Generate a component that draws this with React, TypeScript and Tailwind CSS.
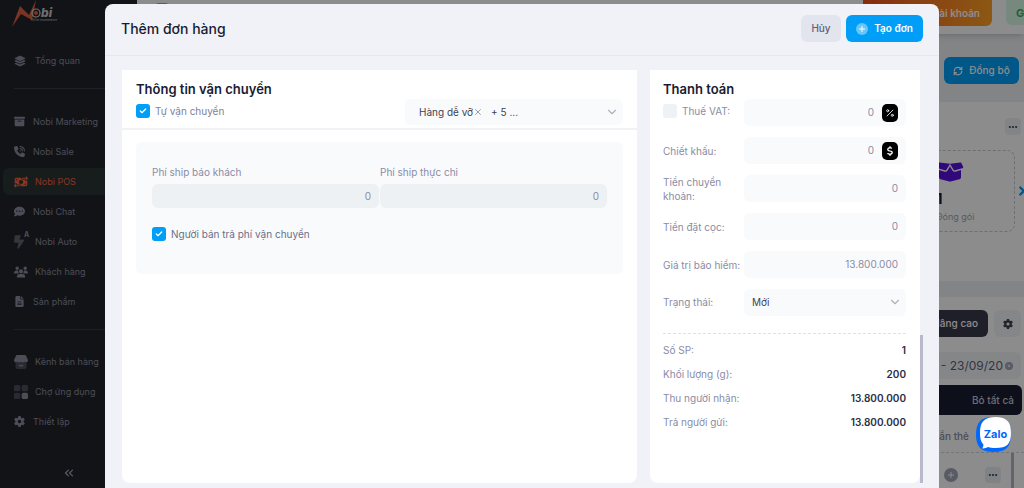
import { useState } from "react";
import type { ReactNode } from "react";
import clsx from "clsx";
import { Check, ChevronDown, ChevronRight, ChevronsLeft, Percent, X } from "lucide-react";
import {
  FaBoltLightning,
  FaBoxArchive,
  FaBoxOpen,
  FaCircleXmark,
  FaCommentDots,
  FaDollarSign,
  FaEllipsis,
  FaFileLines,
  FaGear,
  FaLayerGroup,
  FaMoneyBillTransfer,
  FaPhoneVolume,
  FaPlus,
  FaUsers,
} from "react-icons/fa6";
import { LuRefreshCw } from "react-icons/lu";

type NavItem = {
  label: string;
  icon: ReactNode;
  wide?: boolean;
  active?: boolean;
};

const ShopIcon = () => (
  <svg viewBox="0 0 14 14" className="size-3.5">
    <rect x="1.5" y="4" width="11" height="10" rx="2" fill="#4b4d5c" />
    <path
      d="M3 0h8a1 1 0 0 1 1 .7L14 5a2 2 0 0 1-3.5 1.6 2.4 2.4 0 0 1-3.5 0 2.4 2.4 0 0 1-3.5 0A2 2 0 0 1 0 5L2 .7A1 1 0 0 1 3 0z"
      fill="#8a8c9e"
    />
    <path d="M4.8 10c1 1.3 3.4 1.3 4.4 0" stroke="#a5a7b5" fill="none" />
  </svg>
);

const AppsIcon = () => (
  <svg viewBox="0 0 14 14" className="size-3.5">
    <rect width="6.3" height="6.3" rx="1.6" fill="#4b4d5c" />
    <rect x="7.7" width="6.3" height="6.3" rx="1.6" fill="#4b4d5c" />
    <rect y="7.7" width="6.3" height="6.3" rx="1.6" fill="#4b4d5c" />
    <rect x="7.7" y="7.7" width="6.3" height="6.3" rx="1.6" fill="#8a8c9e" />
  </svg>
);

const AutoIcon = () => (
  <span className="flex items-start">
    <FaBoltLightning className="h-3.5 w-2.5 text-[#5f6170]" />
    <span className="-mt-1 text-[7px] leading-[8px] font-bold">A</span>
  </span>
);

const mainNav: NavItem[] = [
  { label: "Nobi Marketing", icon: <FaBoxArchive className="size-[11px]" /> },
  { label: "Nobi Sale", icon: <FaPhoneVolume className="size-[11px]" /> },
  {
    label: "Nobi POS",
    icon: <FaMoneyBillTransfer className="size-3.5" />,
    wide: true,
    active: true,
  },
  { label: "Nobi Chat", icon: <FaCommentDots className="size-[11px]" /> },
  { label: "Nobi Auto", icon: <AutoIcon />, wide: true },
  { label: "Khách hàng", icon: <FaUsers className="size-3.5" />, wide: true },
  { label: "Sản phẩm", icon: <FaFileLines className="size-[11px]" /> },
];

const extraNav: NavItem[] = [
  { label: "Kênh bán hàng", icon: <ShopIcon />, wide: true },
  { label: "Chợ ứng dụng", icon: <AppsIcon />, wide: true },
  { label: "Thiết lập", icon: <FaGear className="size-[11px]" /> },
];

function NavLink({ item }: { item: NavItem }) {
  return (
    <a
      href="#"
      className={clsx(
        "ml-[3px] flex h-[27px] items-center rounded-l-md pl-[11px] text-[9px] whitespace-nowrap",
        item.active ? "bg-[#2b3336] text-[#f8633f]" : "text-[#8a8c9e]"
      )}
    >
      <span className={clsx("flex justify-start", item.wide ? "w-[21px]" : "w-[19px]")}>
        {item.icon}
      </span>
      {item.label}
    </a>
  );
}

function Logo() {
  return (
    <div className="flex h-[30px] items-start pl-[11px]">
      <svg viewBox="0 0 26 28" className="h-7 w-[26px] shrink-0">
        <path d="M1 27 L9 6 L18 15 L25 0 L21 20 L10 14 Z" fill="#e0603c" />
      </svg>
      <div className="-ml-1.5 pt-[7px] text-[#c8c8cc]">
        <div className="flex items-center text-xs leading-[11px] font-extrabold italic">
          <svg viewBox="0 0 10 10" className="size-2.5">
            <circle cx="5" cy="5" r="4" fill="none" stroke="#c8c8cc" strokeWidth="1.2" />
            <circle cx="5" cy="5" r="2" fill="#e0603c" />
          </svg>
          bi
        </div>
        <div className="text-[3px] leading-[4px]">All for ecommerce</div>
      </div>
    </div>
  );
}

function Sidebar() {
  return (
    <aside className="flex w-[137px] shrink-0 flex-col bg-[#22242b]">
      <Logo />
      <nav className="flex flex-1 flex-col">
        <div className="mt-[17px]">
          <NavLink
            item={{
              label: "Tổng quan",
              icon: <FaLayerGroup className="size-3" />,
              wide: true,
            }}
          />
        </div>
        <hr className="mt-3.5 ml-3.5 border-[#3a3c46]" />
        <div className="mt-[19px] flex flex-col gap-[3px]">
          {mainNav.map((item) => (
            <NavLink key={item.label} item={item} />
          ))}
        </div>
        <hr className="mt-3.5 ml-3.5 border-[#3a3c46]" />
        <div className="mt-[18px] flex flex-col gap-[3px]">
          {extraNav.map((item) => (
            <NavLink key={item.label} item={item} />
          ))}
        </div>
      </nav>
      <button type="button" aria-label="Thu gọn" className="mb-2 flex justify-center text-[#a5a7b5]">
        <ChevronsLeft className="size-3.5" />
      </button>
    </aside>
  );
}

function Dashboard() {
  return (
    <div className="flex min-w-0 flex-1 flex-col bg-[#edf1f4]">
      <header className="flex h-[34px] shrink-0 items-start justify-between bg-white pl-[18px] shadow-md">
        <span className="mt-[3px] size-3.5 rounded-sm bg-[#f58a6e]" />
        <div className="flex gap-3.5">
          <button
            type="button"
            className="h-[26px] w-[129px] rounded-b-md bg-linear-to-r from-[#f1501f] to-[#ffa024] pr-3 text-right text-[10px] font-semibold text-white"
          >
            Nâng cấp tài khoản
          </button>
          <div className="h-[25px] w-[18px] rounded-bl-md bg-[#d9f7e5] pl-2.5 text-[11px] leading-[26px] font-bold text-[#31b566]">
            G
          </div>
        </div>
      </header>

      <div className="flex h-[68px] shrink-0 items-center justify-end pt-[5px] pr-[5px]">
        <button
          type="button"
          className="flex h-[27px] w-[75px] items-center justify-center gap-1.5 rounded-md bg-[#009ef7] text-[10px] font-medium text-white"
        >
          <LuRefreshCw className="size-2.5" strokeWidth={3} />
          Đồng bộ
        </button>
      </div>

      <section className="flex h-[179px] shrink-0 flex-col bg-white pt-4 pr-[3px]">
        <button
          type="button"
          aria-label="Thêm"
          className="flex h-[17px] w-4 items-center justify-center self-end rounded bg-[#edf1f4] text-[#3f4254]"
        >
          <FaEllipsis className="size-2.5" />
        </button>
        <div className="mt-[15px] flex items-center justify-end">
          <div className="flex h-[82px] w-[130px] flex-col rounded-lg border border-dashed border-[#c9c9d6] pt-2.5 pl-[50px]">
            <FaBoxOpen className="h-[22px] w-7 text-[#5a10dd]" />
            <div className="mt-[5px] text-[15px] leading-[22px] font-bold text-[#181c32]">1</div>
            <div className="text-[9px] leading-[14px] text-[#a1a5b7]">Đóng gói</div>
          </div>
          <ChevronRight className="-mr-2 size-3.5 text-[#009ef7]" strokeWidth={4} />
        </div>
      </section>

      <section className="mt-4 flex flex-1 flex-col bg-white pt-[13px]">
        <div className="flex justify-end gap-1.5 pr-[3px]">
          <button
            type="button"
            className="h-[27px] rounded-md bg-[#3a3a4c] px-2.5 text-[10px] font-medium text-white"
          >
            Nâng cao
          </button>
          <button
            type="button"
            aria-label="Cài đặt"
            className="flex size-[27px] items-center justify-center rounded-md bg-[#f3f5f8] text-[#3f4254]"
          >
            <FaGear className="size-2.5" />
          </button>
        </div>
        <div className="mt-[15px] mr-[3px] flex h-[27px] items-center justify-end gap-0.5 rounded-md bg-[#f3f5f8] pr-2 text-xs text-[#5e6278]">
          4 - 23/09/20
          <FaCircleXmark className="size-2 text-[#a1a5b7]" />
        </div>
        <button
          type="button"
          className="mt-1.5 mr-0.5 h-[30px] rounded-md bg-[#181c32] pr-2 text-right text-[10px] font-medium text-[#c5c8d4]"
        >
          Bỏ tất cả
        </button>
        <div className="flex h-[38px] items-center justify-end border-b border-dashed border-[#d5d7e0] pt-1.5 pr-[55px] text-[10px] font-medium text-[#8a8ca5]">
          Gắn thẻ
        </div>
        <div className="flex flex-1 items-start justify-end">
          <div className="flex items-center gap-[27px] pt-3.5 pr-2.5">
            <button
              type="button"
              aria-label="Thêm thẻ"
              className="flex size-3.5 items-center justify-center rounded-full bg-[#a1a5b7] text-white"
            >
              <FaPlus className="size-2" />
            </button>
            <button
              type="button"
              aria-label="Tùy chọn"
              className="flex size-4 items-center justify-center rounded bg-[#e9eef3] text-[#3f4254]"
            >
              <FaEllipsis className="size-2.5" />
            </button>
          </div>
          <div className="mr-2.5 h-full w-[3px] bg-[#b5b5c3]" />
        </div>
      </section>
    </div>
  );
}

function Checkbox({ id, defaultChecked = false }: { id: string; defaultChecked?: boolean }) {
  return (
    <span className="relative flex size-3.5 shrink-0">
      <input
        id={id}
        type="checkbox"
        defaultChecked={defaultChecked}
        className="peer size-3.5 appearance-none rounded-[3px] bg-[#eff2f5] checked:bg-[#009ef7]"
      />
      <Check
        className="pointer-events-none absolute inset-0 m-auto hidden size-2 text-white peer-checked:block"
        strokeWidth={4}
      />
    </span>
  );
}

function ShippingPanel() {
  const [tag, setTag] = useState<string | null>("Hàng dễ vỡ");

  return (
    <section className="flex min-w-0 flex-1 flex-col rounded-b-lg bg-white pt-[9px]">
      <div className="border-b-2 border-[#f1f2f6] px-3.5 pb-[3px]">
        <h2 className="text-[13px] leading-5 font-semibold text-[#181c32]">Thông tin vận chuyển</h2>
        <div className="flex items-start justify-between">
          <div className="flex h-6 items-center gap-[5px] text-[10px] text-[#7e8299]">
            <Checkbox id="self-ship" defaultChecked />
            <label htmlFor="self-ship">Tự vận chuyển</label>
          </div>
          <div className="flex h-[26px] w-[218px] items-center rounded-md bg-[#f9fafc] pr-1 pl-3.5 text-[10px] text-[#3f4254]">
            {tag ? (
              <span className="mr-2 flex items-center">
                {tag}
                <button type="button" aria-label="Xóa" onClick={() => setTag(null)}>
                  <X className="size-2.5 text-[#8c8c8c]" strokeWidth={2} />
                </button>
              </span>
            ) : null}
            <span>+ 5 ...</span>
            <button type="button" aria-label="Mở danh sách" className="ml-auto text-[#b0b0b8]">
              <ChevronDown className="size-3.5" strokeWidth={2} />
            </button>
          </div>
        </div>
      </div>

      <div className="mx-3.5 mt-3 rounded-md bg-[#f9fafc] px-4 pt-5 pb-8 text-[10px]">
        <div className="grid grid-cols-2 gap-px text-[#8a8ca5]">
          <div>
            <label htmlFor="quoted-fee" className="block h-[22px] leading-5">
              Phí ship báo khách
            </label>
            <input
              id="quoted-fee"
              defaultValue="0"
              className="h-6 w-full rounded-md bg-[#eef1f4] px-2 text-right"
            />
          </div>
          <div>
            <label htmlFor="real-fee" className="block h-[22px] leading-5">
              Phí ship thực chi
            </label>
            <input
              id="real-fee"
              defaultValue="0"
              className="h-6 w-full rounded-md bg-[#eef1f4] px-2 text-right"
            />
          </div>
        </div>
        <div className="mt-[18px] flex h-4 items-center gap-[5px] text-[#6b6f88]">
          <Checkbox id="seller-pays" defaultChecked />
          <label htmlFor="seller-pays">Người bán trả phí vận chuyển</label>
        </div>
      </div>
    </section>
  );
}

const amounts = [
  { id: "discount", label: "Chiết khấu:", value: "0", unit: <FaDollarSign className="size-2.5" /> },
  { id: "transfer", label: "Tiền chuyển khoản:", value: "0" },
  { id: "deposit", label: "Tiền đặt cọc:", value: "0" },
  { id: "insurance", label: "Giá trị bảo hiểm:", value: "13.800.000" },
];

const totals = [
  { label: "Số SP:", value: "1" },
  { label: "Khối lượng (g):", value: "200" },
  { label: "Thu người nhận:", value: "13.800.000" },
  { label: "Trả người gửi:", value: "13.800.000" },
];

function AmountInput({ id, value, unit }: { id: string; value: string; unit?: ReactNode }) {
  return (
    <div className="flex h-[27px] min-w-0 flex-1 items-center gap-2 rounded-md bg-[#f9fafc] px-2">
      <input
        id={id}
        defaultValue={value}
        className="w-full min-w-0 bg-transparent text-right text-[#8a8ca5]"
      />
      {unit ? (
        <button
          type="button"
          aria-label="Đổi đơn vị"
          className="flex h-[18px] w-4 shrink-0 items-center justify-center rounded-[5px] bg-black text-white"
        >
          {unit}
        </button>
      ) : null}
    </div>
  );
}

function PaymentPanel() {
  return (
    <section className="w-[270px] shrink-0 rounded-b-lg bg-white pt-[9px] pr-3.5 pl-[13px] text-[10px] text-[#8a8ca5]">
      <h2 className="text-[13px] leading-5 font-semibold text-[#181c32]">Thanh toán</h2>
      <div className="flex flex-col gap-[11px]">
        <div className="flex items-start">
          <div className="flex h-6 w-[81px] shrink-0 items-center gap-[5px]">
            <Checkbox id="vat" />
            <label htmlFor="vat">Thuế VAT:</label>
          </div>
          <AmountInput
            id="vat-value"
            value="0"
            unit={<Percent className="size-2.5" strokeWidth={2} />}
          />
        </div>
        {amounts.map((row) => (
          <div key={row.id} className="flex h-[27px] items-center">
            <label htmlFor={row.id} className="w-[81px] shrink-0 leading-[14px]">
              {row.label}
            </label>
            <AmountInput id={row.id} value={row.value} unit={row.unit} />
          </div>
        ))}
        <div className="flex h-[27px] items-center">
          <label htmlFor="status" className="w-[81px] shrink-0">
            Trạng thái:
          </label>
          <div className="relative flex-1">
            <select
              id="status"
              className="block h-[27px] w-full appearance-none rounded-md bg-[#f9fafc] px-2 text-[#3f4254]"
            >
              <option>Mới</option>
            </select>
            <ChevronDown
              className="pointer-events-none absolute top-1.5 right-1 size-3.5 text-[#b0b0b8]"
              strokeWidth={2}
            />
          </div>
        </div>
      </div>
      <dl className="mt-[17px] border-t border-dashed border-[#dfe1ea] pt-1">
        {totals.map((row) => (
          <div key={row.label} className="flex h-6 items-center justify-between">
            <dt>{row.label}</dt>
            <dd className="font-semibold text-[#2a2d43]">{row.value}</dd>
          </div>
        ))}
      </dl>
    </section>
  );
}

function OrderModal() {
  return (
    <div className="absolute inset-0 flex bg-black/45 pt-1 pr-[85px] pl-[105px]">
      <div
        role="dialog"
        aria-labelledby="order-title"
        className="flex min-w-0 flex-1 flex-col rounded-t-lg bg-[#f1f2f7]"
      >
        <header className="flex h-[52px] items-center justify-between border-b border-[#e6e8ee] px-4 pb-0.5">
          <h1 id="order-title" className="text-sm font-medium text-[#181c32]">
            Thêm đơn hàng
          </h1>
          <div className="flex gap-[5px]">
            <button
              type="button"
              className="h-[27px] w-10 rounded-md bg-[#e2e4ee] text-[10px] font-medium text-[#5e6278]"
            >
              Hủy
            </button>
            <button
              type="button"
              className="flex h-[27px] w-[77px] items-center justify-center gap-1.5 rounded-md bg-[#009ef7] text-[10px] font-semibold text-white"
            >
              <span className="flex size-3 items-center justify-center rounded-full bg-white/40">
                <FaPlus className="size-2" />
              </span>
              Tạo đơn
            </button>
          </div>
        </header>
        <div className="flex flex-1 pt-3.5 pr-4 pb-[5px] pl-[17px]">
          <ShippingPanel />
          <div className="ml-[13px] flex">
            <PaymentPanel />
            <div className="h-[148px] w-[3px] self-end bg-[#b9b8cc]" />
          </div>
        </div>
      </div>
    </div>
  );
}

function ZaloButton() {
  return (
    <button
      type="button"
      className="absolute right-[13px] bottom-9 flex size-[35px] items-center justify-center"
    >
      <svg viewBox="0 0 35 35" className="absolute inset-0 size-full">
        <path
          d="M17.5 0C30 0 35 5 35 17.5S30 35 17.5 35 0 30 0 17.5 5 0 17.5 0z"
          fill="#0068ff"
        />
        <path
          d="M19.5 0C31 0 35 5 35 16S31 31 19.5 31c-3 0-5.5-.3-7.5-1-1.500 1-4 1.600-6 1.300 1.200-1 1.600-2.500 1.300-4C4.800 25 4 21.500 4 16 4 5 8 0 19.500 0z"
          fill="#fff"
        />
      </svg>
      <span className="relative pl-1 text-[11px] font-bold text-[#0068ff]">Zalo</span>
    </button>
  );
}

export default function App() {
  return (
    <div className="relative flex h-screen overflow-hidden font-[Inter,'Noto_Sans',sans-serif]">
      <Sidebar />
      <Dashboard />
      <OrderModal />
      <ZaloButton />
    </div>
  );
}
